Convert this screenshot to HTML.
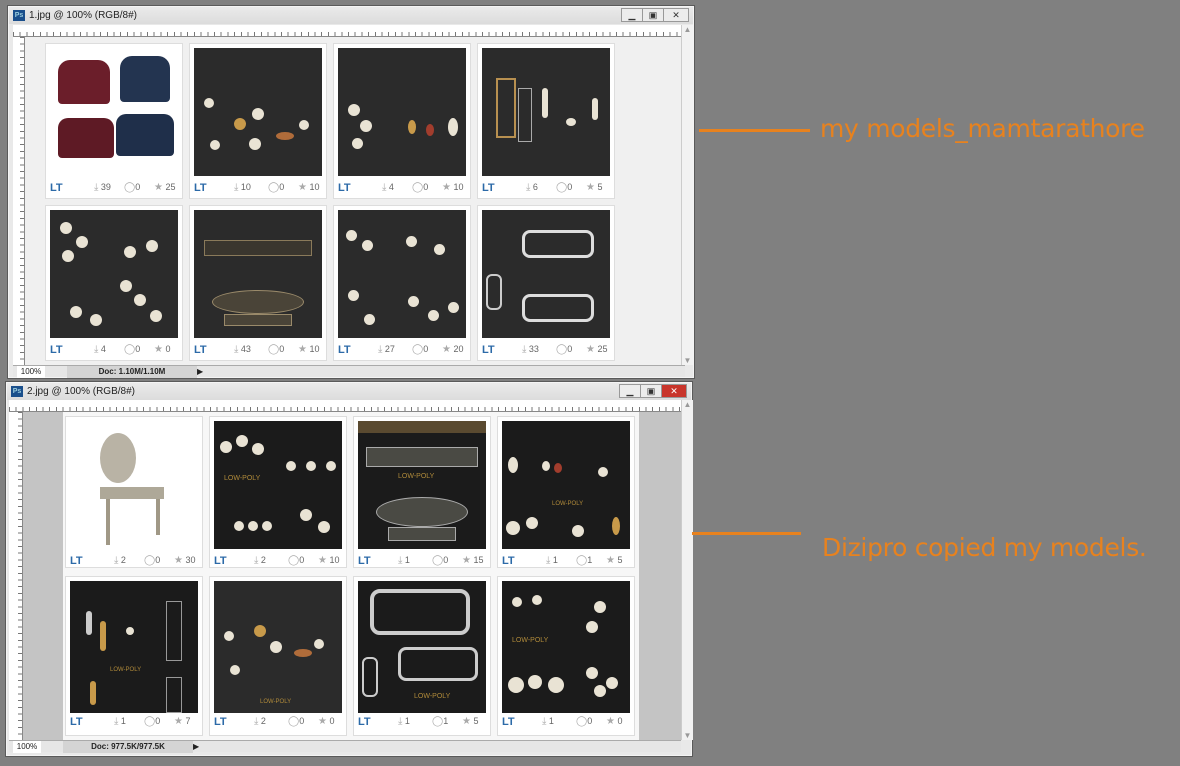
<!DOCTYPE html>
<html><head><meta charset="utf-8">
<style>
*{margin:0;padding:0;box-sizing:border-box}
body{width:1180px;height:766px;background:#808080;position:relative;overflow:hidden;font-family:"Liberation Sans",sans-serif}
.win{position:absolute;background:#e9e9e9;border:1px solid #f4f4f4;box-shadow:0 0 0 1px #5a5a5a}
.title{position:absolute;left:0;right:0;top:0;height:17px;background:linear-gradient(#eaeaea,#dcdcdc);font-size:10px;color:#222;line-height:17px;padding-left:20px}
.ps{position:absolute;left:4px;top:3px;width:12px;height:11px;background:#1a4f8c;color:#9cd;font-size:7px;line-height:11px;text-align:center;font-weight:bold}
.btns{position:absolute;right:4px;top:1px;height:14px;display:flex}
.btns div{width:22px;height:14px;border:1px solid #999;background:#ececec;margin-left:-1px;font-size:9px;text-align:center;line-height:12px;color:#333}
.rulh{background:#fff;background-image:repeating-linear-gradient(90deg,#777 0 1px,transparent 1px 6.7px);background-size:100% 4px;background-repeat:no-repeat;background-position:0 100%;border-bottom:1px solid #888}
.rulv{background:#fff;background-image:repeating-linear-gradient(180deg,#777 0 1px,transparent 1px 6.7px);background-size:4px 100%;background-repeat:no-repeat;background-position:100% 0;border-right:1px solid #888}
.canvas{position:absolute;overflow:hidden}
.card{position:absolute;background:#fff;border:1px solid #ddd;width:138px;height:156px}
.img{position:absolute;left:4px;top:4px;width:128px;height:128px;background:#2b2b2b;overflow:hidden}
.img.w{background:#fff}
.ft{position:absolute;left:4px;right:4px;top:137px;height:14px;font-size:9px;color:#555}
.lt{position:absolute;left:0;top:1px;font-size:11px;font-weight:bold;color:#2c6aa8}
.st{position:absolute;top:1px;color:#666}
.st b{font-weight:normal;color:#aaa;font-size:10px}
.c{position:absolute;border-radius:50%;background:#e9e3d4}
.status{position:absolute;height:12px;font-size:8px;line-height:12px;color:#222}
.orange{position:absolute;color:#e8821e;font-size:25px;font-family:"DejaVu Sans","Liberation Sans",sans-serif;letter-spacing:-0.3px;white-space:nowrap}
.line{position:absolute;height:3px;background:#e8821e}
.scrollv{position:absolute;background:#f2f2f2;border-left:1px solid #ccc;font-size:8px;color:#999;text-align:center}
</style></head><body>

<!-- Window 1 -->
<div class="win" style="left:8px;top:6px;width:686px;height:372px">
 <div class="title"><div class="ps">Ps</div>1.jpg @ 100% (RGB/8#)</div>
 <div class="btns"><div>▁</div><div>▣</div><div style="width:26px">✕</div></div>
 <div class="rulh" style="position:absolute;left:4px;top:18px;width:668px;height:12px"></div>
 <div class="rulv" style="position:absolute;left:4px;top:30px;width:12px;height:328px"></div>
 <div class="canvas" style="left:16px;top:30px;width:656px;height:328px;background:#f0f0f0">
  <div class="card" style="left:20px;top:6px"><div class="img w">
   <div style="position:absolute;left:8px;top:12px;width:52px;height:44px;background:#6b1e2a;border-radius:12px 12px 4px 4px"></div>
   <div style="position:absolute;left:70px;top:8px;width:50px;height:46px;background:#233450;border-radius:12px 12px 4px 4px"></div>
   <div style="position:absolute;left:8px;top:70px;width:56px;height:40px;background:#5e1a25;border-radius:10px 10px 4px 4px"></div>
   <div style="position:absolute;left:66px;top:66px;width:58px;height:42px;background:#1f2f4a;border-radius:10px 10px 4px 4px"></div>
  </div><div class="ft"><span class="lt">LT</span><span class="st" style="left:44px"><b>⤓</b> 39</span><span class="st" style="left:74px"><b>◯</b>0</span><span class="st" style="left:104px"><b>★</b> 25</span></div></div>
  <div class="card" style="left:164px;top:6px"><div class="img">
   <div class="c" style="left:10px;top:50px;width:10px;height:10px"></div><div class="c" style="left:40px;top:70px;width:12px;height:12px;background:#c89a4a"></div><div class="c" style="left:58px;top:60px;width:12px;height:12px"></div><div class="c" style="left:55px;top:90px;width:12px;height:12px"></div><div class="c" style="left:82px;top:84px;width:18px;height:8px;background:#b06c3a"></div><div class="c" style="left:105px;top:72px;width:10px;height:10px"></div><div class="c" style="left:16px;top:92px;width:10px;height:10px"></div>
  </div><div class="ft"><span class="lt">LT</span><span class="st" style="left:40px"><b>⤓</b> 10</span><span class="st" style="left:74px"><b>◯</b>0</span><span class="st" style="left:104px"><b>★</b> 10</span></div></div>
  <div class="card" style="left:308px;top:6px"><div class="img">
   <div class="c" style="left:10px;top:56px;width:12px;height:12px"></div><div class="c" style="left:22px;top:72px;width:12px;height:12px"></div><div class="c" style="left:14px;top:90px;width:11px;height:11px"></div><div class="c" style="left:70px;top:72px;width:8px;height:14px;background:#c89a4a"></div><div class="c" style="left:88px;top:76px;width:8px;height:12px;background:#a23d2d"></div><div class="c" style="left:110px;top:70px;width:10px;height:18px"></div>
  </div><div class="ft"><span class="lt">LT</span><span class="st" style="left:44px"><b>⤓</b> 4</span><span class="st" style="left:74px"><b>◯</b>0</span><span class="st" style="left:104px"><b>★</b> 10</span></div></div>
  <div class="card" style="left:452px;top:6px"><div class="img">
   <div style="position:absolute;left:14px;top:30px;width:20px;height:60px;border:2px solid #b89050"></div><div style="position:absolute;left:36px;top:40px;width:14px;height:54px;border:1px solid #aaa"></div><div class="c" style="left:60px;top:40px;width:6px;height:30px;border-radius:3px"></div><div class="c" style="left:84px;top:70px;width:10px;height:8px"></div><div class="c" style="left:110px;top:50px;width:6px;height:22px;border-radius:3px"></div>
  </div><div class="ft"><span class="lt">LT</span><span class="st" style="left:44px"><b>⤓</b> 6</span><span class="st" style="left:74px"><b>◯</b>0</span><span class="st" style="left:104px"><b>★</b> 5</span></div></div>
  <div class="card" style="left:20px;top:168px"><div class="img">
   <div class="c" style="left:10px;top:12px;width:12px;height:12px"></div><div class="c" style="left:26px;top:26px;width:12px;height:12px"></div><div class="c" style="left:12px;top:40px;width:12px;height:12px"></div><div class="c" style="left:74px;top:36px;width:12px;height:12px"></div><div class="c" style="left:96px;top:30px;width:12px;height:12px"></div><div class="c" style="left:70px;top:70px;width:12px;height:12px"></div><div class="c" style="left:84px;top:84px;width:12px;height:12px"></div><div class="c" style="left:100px;top:100px;width:12px;height:12px"></div><div class="c" style="left:20px;top:96px;width:12px;height:12px"></div><div class="c" style="left:40px;top:104px;width:12px;height:12px"></div>
  </div><div class="ft"><span class="lt">LT</span><span class="st" style="left:44px"><b>⤓</b> 4</span><span class="st" style="left:74px"><b>◯</b>0</span><span class="st" style="left:104px"><b>★</b> 0</span></div></div>
  <div class="card" style="left:164px;top:168px"><div class="img">
   <div style="position:absolute;left:10px;top:30px;width:108px;height:16px;border:1px solid #8a7a5a;background:#3a362e"></div><div style="position:absolute;left:18px;top:80px;width:92px;height:24px;border:1px solid #9a8a6a;border-radius:50%;background:#4a4438"></div><div style="position:absolute;left:30px;top:104px;width:68px;height:12px;border:1px solid #9a8a6a;background:#4a4438"></div>
  </div><div class="ft"><span class="lt">LT</span><span class="st" style="left:40px"><b>⤓</b> 43</span><span class="st" style="left:74px"><b>◯</b>0</span><span class="st" style="left:104px"><b>★</b> 10</span></div></div>
  <div class="card" style="left:308px;top:168px"><div class="img">
   <div class="c" style="left:8px;top:20px;width:11px;height:11px"></div><div class="c" style="left:24px;top:30px;width:11px;height:11px"></div><div class="c" style="left:68px;top:26px;width:11px;height:11px"></div><div class="c" style="left:96px;top:34px;width:11px;height:11px"></div><div class="c" style="left:10px;top:80px;width:11px;height:11px"></div><div class="c" style="left:26px;top:104px;width:11px;height:11px"></div><div class="c" style="left:70px;top:86px;width:11px;height:11px"></div><div class="c" style="left:90px;top:100px;width:11px;height:11px"></div><div class="c" style="left:110px;top:92px;width:11px;height:11px"></div>
  </div><div class="ft"><span class="lt">LT</span><span class="st" style="left:40px"><b>⤓</b> 27</span><span class="st" style="left:74px"><b>◯</b>0</span><span class="st" style="left:104px"><b>★</b> 20</span></div></div>
  <div class="card" style="left:452px;top:168px"><div class="img">
   <div style="position:absolute;left:40px;top:20px;width:72px;height:28px;border:3px solid #ddd;border-radius:8px"></div><div style="position:absolute;left:40px;top:84px;width:72px;height:28px;border:3px solid #ddd;border-radius:8px"></div><div style="position:absolute;left:4px;top:64px;width:16px;height:36px;border:2px solid #ccc;border-radius:6px"></div>
  </div><div class="ft"><span class="lt">LT</span><span class="st" style="left:40px"><b>⤓</b> 33</span><span class="st" style="left:74px"><b>◯</b>0</span><span class="st" style="left:104px"><b>★</b> 25</span></div></div>
 </div>
 <div class="scrollv" style="left:672px;top:18px;width:12px;height:340px">▲<div style="position:absolute;bottom:0;width:100%">▼</div></div>
 <div class="status" style="left:4px;top:358px;width:672px;background:#e6e6e6;border-top:1px solid #aaa">
  <span style="position:absolute;left:4px;width:28px;background:#fff;text-align:center">100%</span>
  <span style="position:absolute;left:38px;width:14px;background:#ccc"></span>
  <span style="position:absolute;left:54px;width:130px;background:#d4d4d4;text-align:center;font-weight:bold">Doc: 1.10M/1.10M</span>
  <span style="position:absolute;left:184px">▶</span>
 </div>
</div>

<!-- Window 2 -->
<div class="win" style="left:6px;top:382px;width:686px;height:374px">
 <div class="title"><div class="ps">Ps</div>2.jpg @ 100% (RGB/8#)</div>
 <div class="btns"><div>▁</div><div>▣</div><div style="width:26px;background:#c8352b;color:#fff">✕</div></div>
 <div class="rulh" style="position:absolute;left:2px;top:17px;width:672px;height:12px"></div>
 <div class="rulv" style="position:absolute;left:2px;top:29px;width:14px;height:328px"></div>
 <div class="canvas" style="left:16px;top:29px;width:658px;height:328px;background:#c4c4c4">
  <div style="position:absolute;left:40px;top:0;width:576px;height:328px;background:#f7f7f7"></div>
  <div class="card" style="left:42px;top:4px;height:152px"><div class="img w">
   <div style="position:absolute;left:30px;top:12px;width:36px;height:50px;background:#b9b3a5;border-radius:50%"></div>
   <div style="position:absolute;left:30px;top:66px;width:64px;height:12px;background:#aea898"></div>
   <div style="position:absolute;left:36px;top:78px;width:4px;height:46px;background:#a09886"></div><div style="position:absolute;left:86px;top:78px;width:4px;height:36px;background:#a09886"></div>
  </div><div class="ft"><span class="lt">LT</span><span class="st" style="left:44px"><b>⤓</b> 2</span><span class="st" style="left:74px"><b>◯</b>0</span><span class="st" style="left:104px"><b>★</b> 30</span></div></div>
  <div class="card" style="left:186px;top:4px;height:152px"><div class="img" style="background:#1b1b1b">
   <div class="c" style="left:6px;top:20px;width:12px;height:12px"></div><div class="c" style="left:22px;top:14px;width:12px;height:12px"></div><div class="c" style="left:38px;top:22px;width:12px;height:12px"></div><div class="c" style="left:72px;top:40px;width:10px;height:10px"></div><div class="c" style="left:92px;top:40px;width:10px;height:10px"></div><div class="c" style="left:112px;top:40px;width:10px;height:10px"></div>
   <div style="position:absolute;left:10px;top:54px;font-size:7px;color:#b08a3a">LOW-POLY</div>
   <div class="c" style="left:20px;top:100px;width:10px;height:10px"></div><div class="c" style="left:34px;top:100px;width:10px;height:10px"></div><div class="c" style="left:48px;top:100px;width:10px;height:10px"></div><div class="c" style="left:86px;top:88px;width:12px;height:12px"></div><div class="c" style="left:104px;top:100px;width:12px;height:12px"></div>
  </div><div class="ft"><span class="lt">LT</span><span class="st" style="left:40px"><b>⤓</b> 2</span><span class="st" style="left:74px"><b>◯</b>0</span><span class="st" style="left:104px"><b>★</b> 10</span></div></div>
  <div class="card" style="left:330px;top:4px;height:152px"><div class="img" style="background:#1b1b1b">
   <div style="position:absolute;left:0;top:0;width:128px;height:12px;background:#5a4a30"></div>
   <div style="position:absolute;left:8px;top:26px;width:112px;height:20px;border:1px solid #aaa;background:#4a4a44"></div>
   <div style="position:absolute;left:40px;top:52px;font-size:7px;color:#b08a3a">LOW-POLY</div>
   <div style="position:absolute;left:18px;top:76px;width:92px;height:30px;border:1px solid #aaa;border-radius:50%;background:#4a4a44"></div>
   <div style="position:absolute;left:30px;top:106px;width:68px;height:14px;border:1px solid #aaa;background:#4a4a44"></div>
  </div><div class="ft"><span class="lt">LT</span><span class="st" style="left:40px"><b>⤓</b> 1</span><span class="st" style="left:74px"><b>◯</b>0</span><span class="st" style="left:104px"><b>★</b> 15</span></div></div>
  <div class="card" style="left:474px;top:4px;height:152px"><div class="img" style="background:#1b1b1b">
   <div class="c" style="left:6px;top:36px;width:10px;height:16px"></div><div class="c" style="left:40px;top:40px;width:8px;height:10px"></div><div class="c" style="left:52px;top:42px;width:8px;height:10px;background:#a23d2d"></div><div class="c" style="left:96px;top:46px;width:10px;height:10px"></div>
   <div style="position:absolute;left:50px;top:80px;font-size:6px;color:#b08a3a">LOW-POLY</div>
   <div class="c" style="left:4px;top:100px;width:14px;height:14px"></div><div class="c" style="left:24px;top:96px;width:12px;height:12px"></div><div class="c" style="left:70px;top:104px;width:12px;height:12px"></div><div class="c" style="left:110px;top:96px;width:8px;height:18px;background:#c89a4a"></div>
  </div><div class="ft"><span class="lt">LT</span><span class="st" style="left:44px"><b>⤓</b> 1</span><span class="st" style="left:74px"><b>◯</b>1</span><span class="st" style="left:104px"><b>★</b> 5</span></div></div>
  <div class="card" style="left:42px;top:164px;height:160px"><div class="img" style="background:#1b1b1b;height:132px">
   <div class="c" style="left:16px;top:30px;width:6px;height:24px;border-radius:3px;background:#ccc"></div><div class="c" style="left:30px;top:40px;width:6px;height:30px;border-radius:3px;background:#c89a4a"></div><div class="c" style="left:56px;top:46px;width:8px;height:8px"></div><div style="position:absolute;left:96px;top:20px;width:16px;height:60px;border:1px solid #999"></div>
   <div style="position:absolute;left:40px;top:86px;font-size:6px;color:#b08a3a">LOW-POLY</div>
   <div class="c" style="left:20px;top:100px;width:6px;height:24px;border-radius:3px;background:#c89a4a"></div><div style="position:absolute;left:96px;top:96px;width:16px;height:36px;border:1px solid #999"></div>
  </div><div class="ft" style="top:138px"><span class="lt">LT</span><span class="st" style="left:44px"><b>⤓</b> 1</span><span class="st" style="left:74px"><b>◯</b>0</span><span class="st" style="left:104px"><b>★</b> 7</span></div></div>
  <div class="card" style="left:186px;top:164px;height:160px"><div class="img" style="height:132px">
   <div class="c" style="left:10px;top:50px;width:10px;height:10px"></div><div class="c" style="left:40px;top:44px;width:12px;height:12px;background:#c89a4a"></div><div class="c" style="left:56px;top:60px;width:12px;height:12px"></div><div class="c" style="left:80px;top:68px;width:18px;height:8px;background:#b06c3a"></div><div class="c" style="left:100px;top:58px;width:10px;height:10px"></div><div class="c" style="left:16px;top:84px;width:10px;height:10px"></div>
   <div style="position:absolute;left:46px;top:118px;font-size:6px;color:#b08a3a">LOW-POLY</div>
  </div><div class="ft" style="top:138px"><span class="lt">LT</span><span class="st" style="left:40px"><b>⤓</b> 2</span><span class="st" style="left:74px"><b>◯</b>0</span><span class="st" style="left:104px"><b>★</b> 0</span></div></div>
  <div class="card" style="left:330px;top:164px;height:160px"><div class="img" style="background:#1b1b1b;height:132px">
   <div style="position:absolute;left:12px;top:8px;width:100px;height:46px;border:4px solid #ccc;border-radius:10px"></div>
   <div style="position:absolute;left:40px;top:66px;width:80px;height:34px;border:3px solid #ccc;border-radius:8px"></div>
   <div style="position:absolute;left:4px;top:76px;width:16px;height:40px;border:2px solid #ccc;border-radius:6px"></div>
   <div style="position:absolute;left:56px;top:112px;font-size:7px;color:#b08a3a">LOW-POLY</div>
  </div><div class="ft" style="top:138px"><span class="lt">LT</span><span class="st" style="left:40px"><b>⤓</b> 1</span><span class="st" style="left:74px"><b>◯</b>1</span><span class="st" style="left:104px"><b>★</b> 5</span></div></div>
  <div class="card" style="left:474px;top:164px;height:160px"><div class="img" style="background:#1b1b1b;height:132px">
   <div class="c" style="left:10px;top:16px;width:10px;height:10px"></div><div class="c" style="left:30px;top:14px;width:10px;height:10px"></div><div class="c" style="left:92px;top:20px;width:12px;height:12px"></div><div class="c" style="left:84px;top:40px;width:12px;height:12px"></div>
   <div style="position:absolute;left:10px;top:56px;font-size:7px;color:#b08a3a">LOW-POLY</div>
   <div class="c" style="left:6px;top:96px;width:16px;height:16px"></div><div class="c" style="left:26px;top:94px;width:14px;height:14px"></div><div class="c" style="left:46px;top:96px;width:16px;height:16px"></div><div class="c" style="left:84px;top:86px;width:12px;height:12px"></div><div class="c" style="left:104px;top:96px;width:12px;height:12px"></div><div class="c" style="left:92px;top:104px;width:12px;height:12px"></div>
  </div><div class="ft" style="top:138px"><span class="lt">LT</span><span class="st" style="left:40px"><b>⤓</b> 1</span><span class="st" style="left:74px"><b>◯</b>0</span><span class="st" style="left:104px"><b>★</b> 0</span></div></div>
 </div>
 <div class="scrollv" style="left:674px;top:17px;width:12px;height:340px">▲<div style="position:absolute;bottom:0;width:100%">▼</div></div>
 <div class="status" style="left:2px;top:357px;width:672px;background:#e6e6e6;border-top:1px solid #aaa">
  <span style="position:absolute;left:4px;width:28px;background:#fff;text-align:center">100%</span>
  <span style="position:absolute;left:38px;width:14px;background:#ccc"></span>
  <span style="position:absolute;left:54px;width:130px;background:#d4d4d4;text-align:center;font-weight:bold">Doc: 977.5K/977.5K</span>
  <span style="position:absolute;left:184px">▶</span>
 </div>
</div>

<div class="line" style="left:699px;top:129px;width:111px"></div>
<div class="orange" style="left:820px;top:114px">my models_mamtarathore</div>
<div class="line" style="left:692px;top:532px;width:109px"></div>
<div class="orange" style="left:822px;top:533px">Dizipro copied my models.</div>
</body></html>
